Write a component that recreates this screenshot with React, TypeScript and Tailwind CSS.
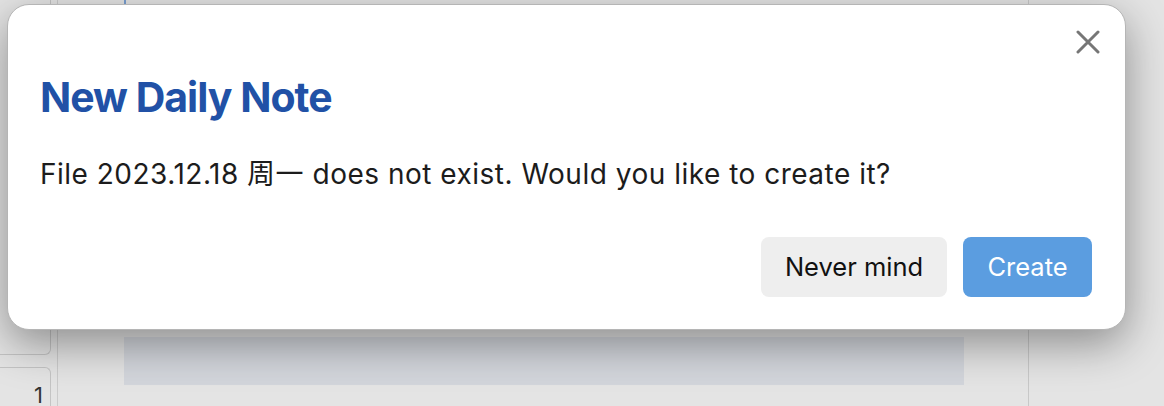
import React from 'react';

const sans = "font-['Inter','Noto_Sans_CJK_SC',sans-serif]";

function Backdrop() {
  return (
    <div className="absolute inset-0 flex bg-[#e4e4e4]">
      <div className="w-[51px] flex flex-col">
        <div className="h-[358px] border-r border-b border-[#c4c4c4] rounded-br-[6px]" />
        <div className="mt-[12px] flex-1 border-r border-t border-[#c4c4c4] rounded-tr-[6px] flex justify-end pr-[7px] pt-[16px]">
          <span className={`${sans} text-[22px] leading-none text-[#333]`}>1</span>
        </div>
      </div>
      <div className="ml-[6px] w-px bg-[#cbcbcb]" />
      <div className="w-[66px]" />
      <div className="w-[840px] flex flex-col">
        <div className="w-[2px] h-[5px] bg-[#7a9fd0]" />
        <div className="mt-[332px] h-[48px] bg-[#d3d6dc]" />
      </div>
      <div className="w-[64px]" />
      <div className="w-px bg-[#c8c8c8]" />
    </div>
  );
}

function CloseIcon() {
  return (
    <svg width="24" height="24" viewBox="0 0 24 24" fill="none">
      <path d="M2 2L22 22M22 2L2 22" stroke="#767676" strokeWidth="3" strokeLinecap="round" />
    </svg>
  );
}

export default function App() {
  return (
    <div className="relative w-[1164px] h-[406px] overflow-hidden">
      <Backdrop />
      <div className="absolute left-[7px] top-[4px] w-[1119px] h-[326px] bg-white rounded-[22px] border border-[#b5b5b5] shadow-[0_14px_44px_rgba(0,0,0,0.38)]">
        <div className="flex justify-end pt-[25px] pr-[25px]">
          <button className="p-0">
            <CloseIcon />
          </button>
        </div>
        <div className="px-[32px]">
          <h1 className={`${sans} mt-[22px] text-[41px] leading-[42px] font-bold tracking-[-1px] text-[#2151a6]`}>
            New Daily Note
          </h1>
          <p className={`${sans} mt-[41px] text-[28px] leading-[30px] tracking-[0.5px] text-[#1c1c1c]`}>
            File 2023.12.18 周一 does not exist. Would you like to create it?
          </p>
          <div className="mt-[48px] flex justify-end gap-[16px] pr-[1px]">
            <button className={`${sans} w-[186px] h-[60px] rounded-[8px] bg-[#eeeeee] text-[25.5px] text-[#111]`}>
              Never mind
            </button>
            <button className={`${sans} w-[129px] h-[60px] rounded-[8px] bg-[#5b9de0] text-[25.5px] text-white`}>
              Create
            </button>
          </div>
        </div>
      </div>
    </div>
  );
}
